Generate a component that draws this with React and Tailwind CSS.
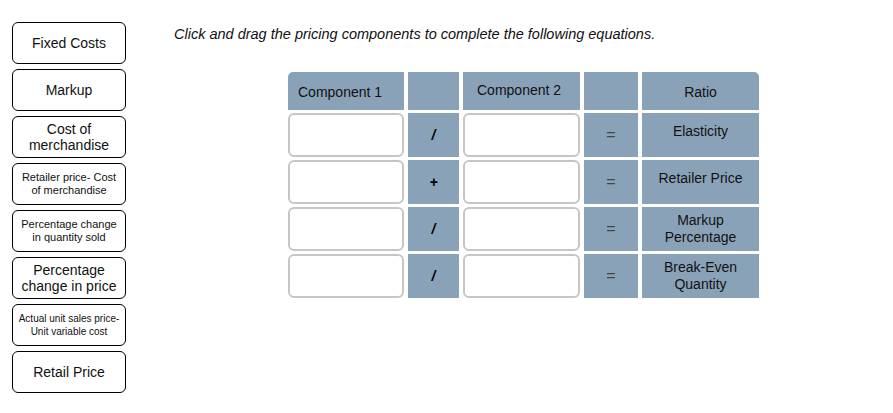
import React from 'react';

const tiles = [
    { label: 'Fixed Costs', size: 'lg' },
    { label: 'Markup', size: 'lg' },
    { label: 'Cost of merchandise', size: 'lg' },
    { label: 'Retailer price- Cost of merchandise', size: 'sm' },
    { label: 'Percentage change in quantity sold', size: 'sm' },
    { label: 'Percentage change in price', size: 'lg' },
    { label: 'Actual unit sales price- Unit variable cost', size: 'xs' },
    { label: 'Retail Price', size: 'lg' },
];

const rows = [
    { op: '/', ratio: 'Elasticity', top: true },
    { op: '+', ratio: 'Retailer Price', top: true },
    { op: '/', ratio: 'Markup Percentage' },
    { op: '/', ratio: 'Break-Even Quantity' },
];

export default function App() {
    return (
        <div
            className="w-[893px] h-[413px] bg-white text-[#111] flex overflow-hidden"
            style={{ fontFamily: '"Liberation Sans", Arial, sans-serif' }}
        >
            {/* LEFT TILES */}
            <div className="pl-[12px] pt-[22px] flex flex-col gap-[5px]">
                {tiles.map((t) => (
                    <div
                        key={t.label}
                        className={
                            'w-[114px] h-[42px] border border-black rounded-[6px] bg-white flex items-center justify-center text-center ' +
                            (t.size === 'xs'
                                ? 'text-[10px] leading-[13px] px-[1px]'
                                : t.size === 'sm'
                                  ? 'text-[11px] leading-[13px] px-[4px]'
                                  : 'text-[14px] leading-[16px] px-[4px]')
                        }
                    >
                        {t.label}
                    </div>
                ))}
            </div>

            {/* MAIN */}
            <div className="pl-[48px] pt-[26px] flex flex-col">
                <p className="italic text-[14.5px] leading-[17px]">
                    Click and drag the pricing components to complete the following equations.
                </p>

                <div className="ml-[114px] mt-[29px] grid grid-cols-[116px_51px_117px_54px_117px] grid-rows-[38px_44px_44px_44px_44px] gap-x-[4px] gap-y-[3px] text-[14px]">
                    {/* HEADER */}
                    <div className="bg-[#8aa2b8] rounded-tl-[5px] flex items-center pl-[10px] pt-[2px]">
                        Component 1
                    </div>
                    <div className="bg-[#8aa2b8]" />
                    <div className="bg-[#8aa2b8] flex items-center pl-[14px] pb-[2px]">
                        Component 2
                    </div>
                    <div className="bg-[#8aa2b8]" />
                    <div className="bg-[#8aa2b8] rounded-tr-[5px] flex items-center justify-center pt-[2px]">
                        Ratio
                    </div>

                    {rows.map((r, i) => (
                        <React.Fragment key={i}>
                            <div className="bg-white border-2 border-[#c6c6c6] rounded-[6px]" />
                            <div className="bg-[#8aa2b8] flex items-center justify-center text-[14px] italic text-black font-bold">
                                {r.op}
                            </div>
                            <div className="bg-white border-2 border-[#c6c6c6] rounded-[6px]" />
                            <div className="bg-[#8aa2b8] flex items-center justify-center text-[16px] text-[#444]">
                                =
                            </div>
                            <div
                                className={
                                    'bg-[#8aa2b8] flex justify-center text-center leading-[17px] ' +
                                    (r.top ? 'items-start pt-[10px]' : 'items-center')
                                }
                            >
                                {r.ratio}
                            </div>
                        </React.Fragment>
                    ))}
                </div>
            </div>
        </div>
    );
}
